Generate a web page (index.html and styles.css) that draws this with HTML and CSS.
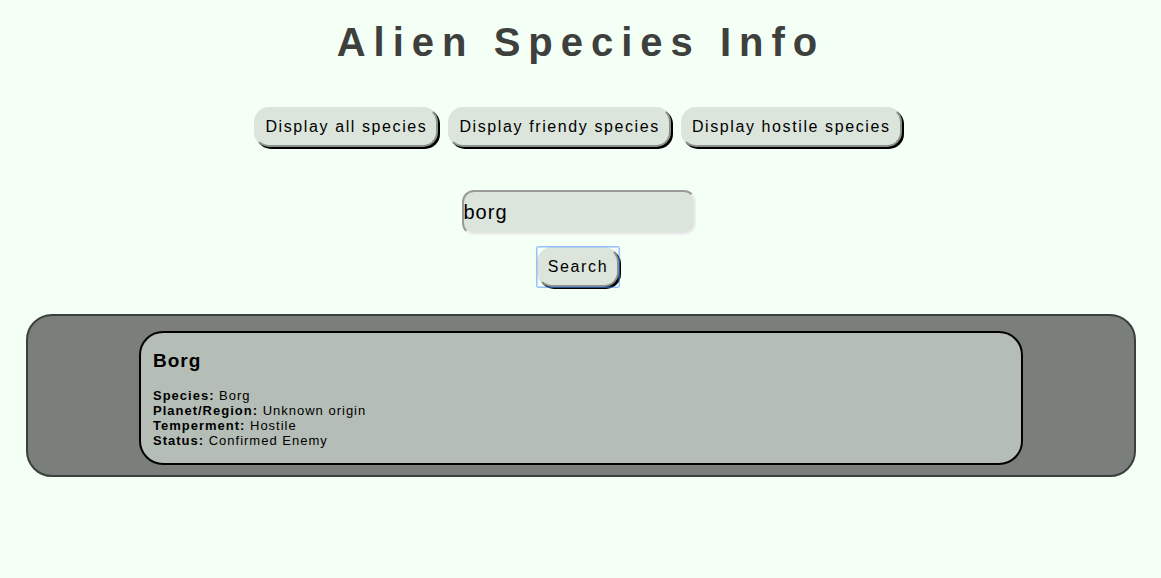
FILE: index.html
```html
<!DOCTYPE html>
<html lang="en">
<head>
<meta charset="utf-8">
<title>Alien Species Info</title>
<link rel="stylesheet" href="styles.css">
</head>
<body>
<h1 class="title">Alien Species Info</h1>
<div class="filters">
<button class="btn" type="button">Display all species</button>
<button class="btn" type="button">Display friendy species</button>
<button class="btn" type="button">Display hostile species</button>
</div>
<form class="search">
<input class="search-box" type="text" aria-label="Species name" value="borg">
<button class="btn btn-active" type="button">Search</button>
</form>
<main class="results">
<article class="card">
<h2 class="card-name">Borg</h2>
<p class="card-line"><b>Species:</b> Borg</p>
<p class="card-line"><b>Planet/Region:</b> Unknown origin</p>
<p class="card-line"><b>Temperment:</b> Hostile</p>
<p class="card-line"><b>Status:</b> Confirmed Enemy</p>
</article>
</main>
</body>
</html>
```

FILE: styles.css
```css
body {
  margin: 0;
  padding: 19px 25px 0 26px;
  background: #f4fff5;
  color: #000;
  font-family: "Liberation Sans", Arial, sans-serif;
}
.title {
  margin: 0;
  color: #3d403c;
  font-size: 40px;
  line-height: 46px;
  letter-spacing: 8px;
  text-align: center;
}
.filters {
  display: flex;
  justify-content: center;
  gap: 4px;
  margin-top: 42px;
}
.btn {
  height: 40px;
  margin: 0 6px 0 0;
  padding: 0 9px;
  border: 2px outset #dbe5dc;
  border-radius: 15px;
  background: #dbe5dc;
  box-shadow: 2px 2px #000;
  color: #000;
  font: 16px "Liberation Sans", Arial, sans-serif;
  letter-spacing: 0.1em;
}
.search {
  display: flex;
  flex-direction: column;
  align-items: center;
  gap: 12px;
  margin-top: 43px;
}
.search-box {
  box-sizing: border-box;
  width: 234px;
  height: 45px;
  margin: 0 5px 0 0;
  padding: 0;
  border: 2px inset #eee;
  border-radius: 12px;
  background: #dbe5dc;
  color: #000;
  font: 20px "Liberation Sans", Arial, sans-serif;
  letter-spacing: 1px;
}
.btn-active {
  position: relative;
  outline: none;
}
.btn-active::after {
  content: "";
  position: absolute;
  inset: -3px;
  border: 1px solid rgba(77, 144, 254, 0.55);
  border-radius: 2px;
  box-shadow: inset 0 0 0 1px rgba(77, 144, 254, 0.3);
}
.results {
  margin-top: 27px;
  padding: 15px 10% 10px;
  border: 2px solid #3b403c;
  border-radius: 26px;
  background: #7a7f7b;
}
.card {
  padding: 16px 12px 15px;
  border: 2px solid #000;
  border-radius: 24px;
  background: #b4bdb6;
  font-size: 13px;
  line-height: 15px;
  letter-spacing: 1px;
}
.card-name {
  margin: 0 0 15px;
  font-size: 19px;
  line-height: 24px;
}
.card-line {
  margin: 0;
}
```
